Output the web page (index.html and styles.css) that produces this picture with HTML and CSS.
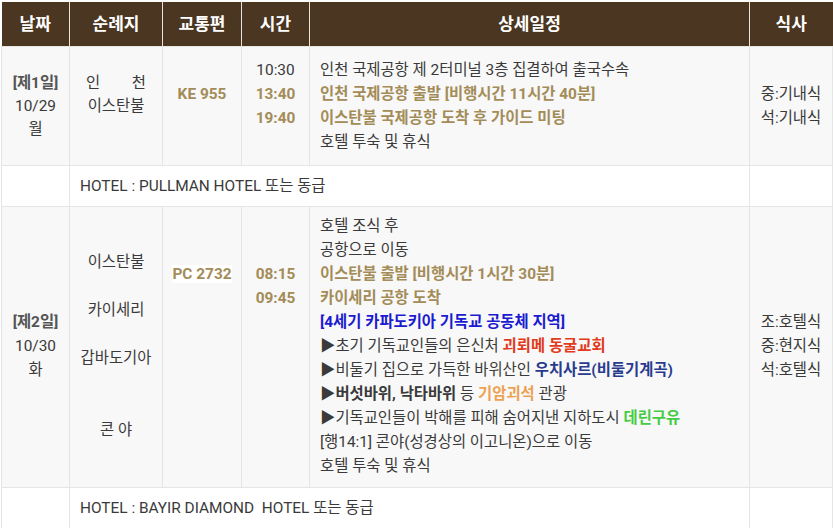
FILE: index.html
```html
<!DOCTYPE html>
<html lang="ko">
<head>
<meta charset="utf-8">
<title>일정표</title>
<link rel="stylesheet" href="styles.css">
</head>
<body>
<table class="sched">
  <colgroup>
    <col class="c-date"><col class="c-place"><col class="c-flight"><col class="c-time"><col class="c-detail"><col class="c-meal">
  </colgroup>
  <thead>
    <tr>
      <th>날짜</th><th>순례지</th><th>교통편</th><th>시간</th><th>상세일정</th><th>식사</th>
    </tr>
  </thead>
  <tbody>
    <tr class="day day1">
      <td class="date lh23"><b>[제1일]</b><br>10/29<br>월</td>
      <td class="place lh23"><span class="spread"><span>인</span><span>천</span></span><br>이스탄불<br>&nbsp;</td>
      <td class="flight top"><br><span class="gold">KE 955</span></td>
      <td class="time top">10:30<br><span class="gold">13:40</span><br><span class="gold">19:40</span></td>
      <td class="detail">인천 국제공항 제 2터미널 3층 집결하여 출국수속<br>
        <span class="gold">인천 국제공항 출발 [비행시간 11시간 40분]</span><br>
        <span class="gold">이스탄불 국제공항 도착 후 가이드 미팅</span><br>
        호텔 투숙 및 휴식</td>
      <td class="meal">중:기내식<br>석:기내식</td>
    </tr>
    <tr class="hotel">
      <td></td>
      <td class="hotel-name" colspan="4">HOTEL : PULLMAN HOTEL 또는 동급</td>
      <td></td>
    </tr>
    <tr class="day day2">
      <td class="date"><b>[제2일]</b><br>10/30<br>화</td>
      <td class="place">이스탄불<br><br>카이세리<br><br>갑바도기아<br><br><br>콘 야</td>
      <td class="flight top"><br><br><span class="gold hl">PC 2732</span></td>
      <td class="time top"><br><br><span class="gold">08:15</span><br><span class="gold">09:45</span></td>
      <td class="detail">호텔 조식 후<br>
        공항으로 이동<br>
        <span class="gold">이스탄불 출발 [비행시간 1시간 30분]</span><br>
        <span class="gold">카이세리 공항 도착</span><br>
        <b class="blue">[4세기 카파도키아 기독교 공동체 지역]</b><br>
        ▶초기 기독교인들의 은신처 <b class="red">괴뢰메 동굴교회</b><br>
        ▶비둘기 집으로 가득한 바위산인 <b class="navy">우치사르(비둘기계곡)</b><br>
        <b>▶버섯바위, 낙타바위</b> 등 <b class="orange">기암괴석</b> 관광<br>
        ▶기독교인들이 박해를 피해 숨어지낸 지하도시 <b class="green">데린구유</b><br>
        [행14:1] 콘야(성경상의 이고니온)으로 이동<br>
        호텔 투숙 및 휴식</td>
      <td class="meal">조:호텔식<br>중:현지식<br>석:호텔식</td>
    </tr>
    <tr class="hotel">
      <td></td>
      <td class="hotel-name" colspan="4">HOTEL : BAYIR DIAMOND&nbsp; HOTEL 또는 동급</td>
      <td></td>
    </tr>
  </tbody>
</table>
</body>
</html>
```

FILE: styles.css
```css
html, body {
  margin: 0;
  background: #ffffff;
}
body {
  padding: 2px 1px 0 1px;
  font-family: Roboto, "Noto Sans CJK KR", sans-serif;
  font-size: 15.4px;
  color: #3a3a3a;
}
.sched {
  width: 831px;
  border-collapse: collapse;
  table-layout: fixed;
}
.c-date { width: 68px; }
.c-place { width: 93px; }
.c-flight { width: 79px; }
.c-time { width: 68px; }
.c-detail { width: 440px; }
.c-meal { width: 83px; }

.sched th {
  background: #4b3621;
  color: #ffffff;
  font-size: 17px;
  font-weight: 700;
  height: 44px;
  padding: 0;
  border-right: 1px solid #e8e2da;
  line-height: 24px;
}
.sched th:last-child { border-right: none; }

.sched td {
  border: 1px solid #e5e5e5;
  text-align: center;
  vertical-align: middle;
  line-height: 24px;
  padding: 0 4px;
}
.day td { background: #f8f8f8; }
.day1 td { height: 96px; padding-top: 11px; padding-bottom: 11px; }
.day2 td { height: 264px; padding-top: 7px; padding-bottom: 9px; }
.sched td.top { vertical-align: top; }
.sched td.lh23 { line-height: 23px; }

.date b { color: #555555; font-weight: 700; }

.spread {
  display: inline-flex;
  justify-content: space-between;
  width: 60px;
}

.flight .gold, .time .gold { font-weight: 700; }

.sched td.detail {
  text-align: left;
  padding-left: 10px;
  padding-right: 6px;
}
.gold { color: #a38c58; font-weight: 700; }
.hl { background: #ffffff; }
.blue { color: #1b1bd0; }
.red { color: #e23a1c; }
.navy { color: #283b8e; }
.orange { color: #eda253; }
.green { color: #45cc45; }
b { font-weight: 700; }

.hotel td { background: #ffffff; height: 40px; padding: 0; }
.sched td.hotel-name {
  text-align: left;
  padding-left: 10px;
}
```
